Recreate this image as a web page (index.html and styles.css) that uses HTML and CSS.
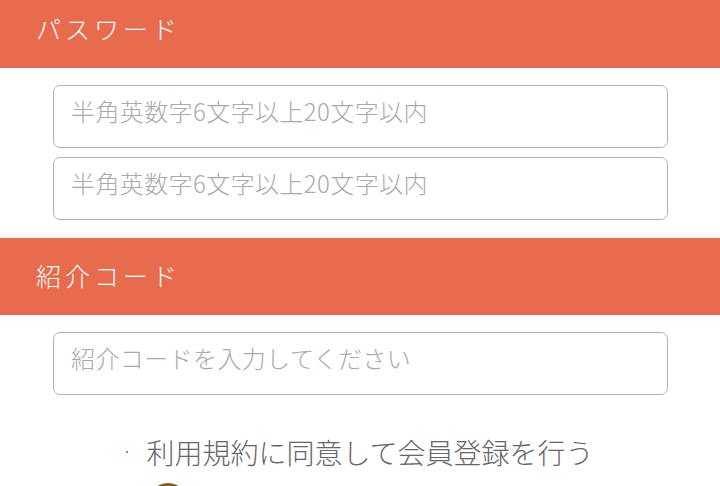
FILE: index.html
```html
<!DOCTYPE html>
<html lang="ja">
  <head>
    <meta charset="UTF-8" />
    <meta name="viewport" content="width=device-width, initial-scale=1.0" />
    <title>会員登録</title>
    <link rel="stylesheet" href="styles.css">
  </head>
  <body>
    <div class="container">
      <div class="section_title">パスワード</div>
      <div class="fields">
        <input type="password" class="field" placeholder="半角英数字6文字以上20文字以内" />
        <input type="password" class="field" placeholder="半角英数字6文字以上20文字以内" />
      </div>
      <div class="section_title">紹介コード</div>
      <div class="fields">
        <input type="text" class="field" placeholder="紹介コードを入力してください" />
      </div>
      <div class="agree">
        <span class="agree_dot"></span>
        <span class="agree_text">利用規約に同意して会員登録を行う</span>
      </div>
      <div class="submit_icon"></div>
    </div>
  </body>
</html>
```

FILE: styles.css
```css
html,
body {
  margin: 0;
  padding: 0;
  background-color: #fff;
  overflow: hidden;
}
.container {
  margin-top: -9px;
  font-family: "Noto Sans CJK JP", "Noto Sans", sans-serif;
}
.section_title {
  display: flex;
  align-items: center;
  box-sizing: border-box;
  height: 77px;
  padding: 0 0 4px 36px;
  background-color: #e76b4c;
  color: #fff;
  font-size: 25px;
  font-weight: 300;
  letter-spacing: 4px;
}
.fields {
  display: flex;
  flex-direction: column;
  row-gap: 9px;
  padding: 17px 52px 18px 53px;
}
.field {
  box-sizing: border-box;
  width: 100%;
  height: 63px;
  padding: 0 17px 12px;
  border: 1px solid #b3b3b3;
  border-radius: 7px;
  font-family: inherit;
  font-size: 24px;
  font-weight: 300;
  letter-spacing: 0.4px;
  color: #333;
  outline: none;
}
.field::placeholder {
  color: #aaa;
}
.agree {
  display: flex;
  justify-content: center;
  align-items: center;
  column-gap: 18px;
  margin-top: 19px;
  height: 40px;
}
.agree_dot {
  width: 2px;
  height: 2px;
  background-color: #e76b4c;
}
.agree_text {
  font-size: 28px;
  font-weight: 300;
  color: #666;
}
.submit_icon {
  margin: 11px 0 0 148px;
  width: 40px;
  height: 40px;
  border-radius: 50%;
  background-color: #8a5a22;
}
```
